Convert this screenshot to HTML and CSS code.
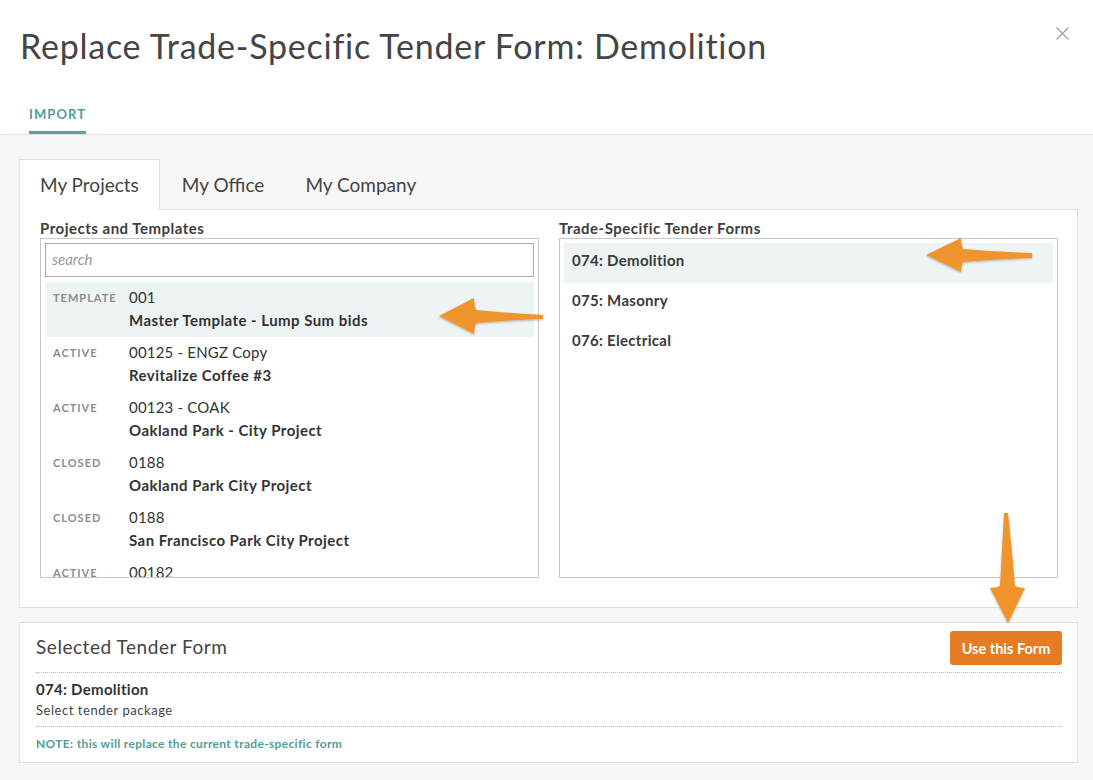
FILE: index.html
```html
<!DOCTYPE html>
<html>
<head>
<meta charset="utf-8">
<link rel="stylesheet" href="styles.css">
</head>
<body>
<div class="page">
  <header class="header">
    <div class="title-row">
      <h1 class="title">Replace Trade-Specific Tender Form: Demolition</h1>
      <button class="close" aria-label="Close">
        <svg width="13" height="13" viewBox="0 0 13 13"><path d="M0.5 0.5L12.5 12.5M12.5 0.5L0.5 12.5" stroke="#9a9a9a" stroke-width="1.1" fill="none"/></svg>
      </button>
    </div>
    <nav class="top-tabs"><span class="top-tab active">IMPORT</span></nav>
  </header>

  <main class="content">
    <div class="tabs">
      <div class="tab active">My Projects</div>
      <div class="tab">My Office</div>
      <div class="tab">My Company</div>
    </div>
    <section class="tab-panel">
      <div class="col">
        <div class="col-label">Projects and Templates</div>
        <div class="list-box">
          <div class="search">search</div>
          <div class="proj selected">
            <div class="status">TEMPLATE</div>
            <div class="proj-text"><div class="num">001</div><div class="name">Master Template - Lump Sum bids</div></div>
          </div>
          <div class="proj">
            <div class="status">ACTIVE</div>
            <div class="proj-text"><div class="num">00125 - ENGZ Copy</div><div class="name">Revitalize Coffee #3</div></div>
          </div>
          <div class="proj">
            <div class="status">ACTIVE</div>
            <div class="proj-text"><div class="num">00123 - COAK</div><div class="name">Oakland Park - City Project</div></div>
          </div>
          <div class="proj">
            <div class="status">CLOSED</div>
            <div class="proj-text"><div class="num">0188</div><div class="name">Oakland Park City Project</div></div>
          </div>
          <div class="proj">
            <div class="status">CLOSED</div>
            <div class="proj-text"><div class="num">0188</div><div class="name">San Francisco Park City Project</div></div>
          </div>
          <div class="proj">
            <div class="status">ACTIVE</div>
            <div class="proj-text"><div class="num">00182</div><div class="name">Project</div></div>
          </div>
        </div>
      </div>
      <div class="col">
        <div class="col-label">Trade-Specific Tender Forms</div>
        <div class="list-box forms">
          <div class="form selected">074: Demolition</div>
          <div class="form">075: Masonry</div>
          <div class="form">076: Electrical</div>
        </div>
      </div>
    </section>

    <section class="selected-panel">
      <div class="sel-head">
        <h2 class="sel-title">Selected Tender Form</h2>
        <button class="use-btn">Use this Form</button>
      </div>
      <div class="sel-body">
        <div class="sel-name">074: Demolition</div>
        <div class="sel-sub">Select tender package</div>
      </div>
      <div class="sel-note">NOTE: this will replace the current trade-specific form</div>
    </section>
  </main>

  <svg class="arrows" width="1093" height="780" viewBox="0 0 1093 780">
    <defs>
      <filter id="sh" x="-20%" y="-20%" width="140%" height="140%">
        <feDropShadow dx="0" dy="1" stdDeviation="1.2" flood-color="#000" flood-opacity="0.3"/>
      </filter>
    </defs>
    <g fill="#f0942f" filter="url(#sh)">
      <path d="M439 316 L474 298 Q474 305 476 310 Q510 313 543 315 L543 319 Q510 320 476 323 Q474 328 474 334 Z"/>
      <path d="M926 255 L961 238 Q961 244 963 249 Q998 252 1032 253 L1032 258 Q998 259 963 262 Q961 267 961 272 Z"/>
      <path d="M1008 623 L990 588 Q996 588 1000 586 Q1002 550 1004 513 L1008 513 Q1012 550 1015 586 Q1020 588 1025 588 Z"/>
    </g>
  </svg>
</div>
</body>
</html>
```

FILE: styles.css
```css
* { box-sizing: border-box; }
html, body { margin: 0; padding: 0; }
body {
  background: #f7f7f7;
  font-family: "Lato", "Open Sans", sans-serif;
  color: #3d3d3d;
}
.page {
  position: relative;
  width: 1093px;
  height: 780px;
  overflow: hidden;
}
.header {
  background: #fff;
  border-bottom: 1px solid #e0e0e0;
  height: 135px;
  display: flex;
  flex-direction: column;
}
.title-row {
  display: flex;
  justify-content: space-between;
  align-items: flex-start;
  padding: 25px 24px 0 20px;
}
.title {
  margin: 0;
  font-size: 34px;
  font-weight: 400;
  line-height: 42px;
  color: #454545;
  letter-spacing: 0.75px;
}
.close {
  border: 0;
  background: none;
  padding: 0;
  margin-top: 2px;
  width: 13px;
  height: 13px;
  display: flex;
}
.top-tabs {
  margin-top: auto;
  padding-left: 29px;
  display: flex;
}
.top-tab {
  font-size: 13px;
  font-weight: 700;
  letter-spacing: 1.1px;
  color: #4f9e98;
  padding-bottom: 9px;
  border-bottom: 3px solid #55a39c;
  line-height: 16px;
}
.content {
  padding: 24px 15px 0 19px;
}
.tabs {
  display: flex;
  height: 51px;
}
.tab {
  font-size: 19px;
  color: #444;
  padding: 0 20px 0 21px;
  line-height: 50px;
  border: 1px solid transparent;
  border-bottom: 0;
}
.tab.active {
  background: #fff;
  border-color: #e0e0e0;
  padding: 0 20px 0 20px;
  position: relative;
  z-index: 1;
  height: 51px;
}
.tab:nth-child(3) { padding-left: 19px; }
.tab-panel {
  background: #fff;
  border: 1px solid #e0e0e0;
  margin-top: -1px;
  height: 399px;
  display: grid;
  grid-template-columns: 499px 499px;
  column-gap: 20px;
  padding: 8px 20px 0 20px;
}
.col-label {
  font-size: 15px;
  font-weight: 700;
  color: #3d3d3d;
  line-height: 20px;
  letter-spacing: 0.5px;
}
.list-box {
  border: 1px solid #c8c8c8;
  height: 340px;
  overflow: hidden;
  padding: 4px;
}
.search {
  height: 34px;
  border: 1px solid #aaa;
  font-size: 15px;
  font-style: italic;
  color: #999;
  padding: 0 6px;
  line-height: 31px;
  margin-bottom: 5px;
}
.proj {
  display: flex;
  height: 55px;
  padding: 4px 8px 0 8px;
}
.proj.selected { background: #edf4f3; }
.status {
  width: 76px;
  flex: none;
  font-size: 11px;
  font-weight: 700;
  letter-spacing: 1px;
  color: #8c8c8c;
  line-height: 23px;
}
.proj-text { font-size: 15px; line-height: 23px; color: #333; }
.num { font-weight: 400; letter-spacing: 0.2px; }
.name { font-weight: 700; letter-spacing: 0.45px; }
.forms .form {
  height: 40px;
  line-height: 34px;
  font-size: 15px;
  font-weight: 700;
  color: #3a3a3a;
  padding-left: 8px;
  letter-spacing: 0.3px;
}
.form.selected { background: #edf4f3; }
.selected-panel {
  background: #fff;
  border: 1px solid #e0e0e0;
  margin-top: 14px;
  height: 141px;
  padding: 8px 15px 0 16px;
}
.sel-head {
  display: flex;
  justify-content: space-between;
  align-items: flex-start;
  height: 42px;
  border-bottom: 1px dotted #bbb;
}
.sel-title {
  margin: 0;
  font-size: 19px;
  font-weight: 400;
  line-height: 32px;
  color: #444;
  letter-spacing: 0.55px;
}
.use-btn {
  width: 112px;
  height: 34px;
  border: 0;
  border-radius: 3px;
  background: #e57b22;
  color: #fff;
  font-family: "Lato", "Open Sans", sans-serif;
  font-weight: 700;
  font-size: 14.5px;
  padding: 0;
}
.sel-body {
  padding: 6px 0 5px 0;
  border-bottom: 1px dotted #bbb;
}
.sel-name { font-size: 15px; font-weight: 700; line-height: 20px; color: #333; letter-spacing: 0.3px; }
.sel-sub { font-size: 13px; line-height: 22px; color: #444; letter-spacing: 0.55px; }
.sel-note {
  padding-top: 8px;
  font-size: 12px;
  font-weight: 700;
  color: #4f9e98;
  line-height: 17px;
  letter-spacing: 0.33px;
}
.arrows {
  position: absolute;
  left: 0;
  top: 0;
  pointer-events: none;
}
```
